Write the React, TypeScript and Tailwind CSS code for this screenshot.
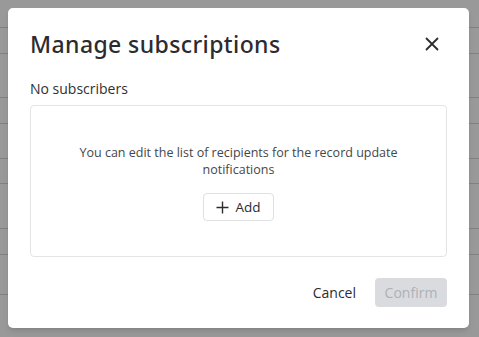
import React from 'react';

const rows = [28, 26, 44, 26, 35, 25, 45, 26, 40];

const App: React.FC = () => {
    return (
        <div className="relative w-[479px] h-[337px] overflow-hidden bg-white" style={{ fontFamily: '"Open Sans", "Noto Sans", sans-serif' }}>
            {/* underlying page */}
            <div className="flex flex-col">
                {rows.map((h, i) => (
                    <div key={i} className="border-b border-[#d8d8d8]" style={{ height: h }} />
                ))}
            </div>

            {/* overlay */}
            <div className="absolute inset-0 bg-[#000]/40 flex items-start justify-start pt-2 pl-2">
                <div className="w-[461px] h-[320px] bg-white rounded-[5px] shadow-md flex flex-col px-[22px] pt-[21px] pb-[21px]">
                    <div className="flex items-center justify-between">
                        <h2 className="text-[23px] leading-[30px] font-medium text-[#2b2c30] tracking-[0.4px]" style={{ fontFamily: '"Noto Sans", sans-serif' }}>
                            Manage subscriptions
                        </h2>
                        <button className="w-6 h-6 flex items-center justify-center mr-[3px] text-[#2b2c30]">
                            <svg width="14" height="14" viewBox="0 0 14 14" fill="none" stroke="currentColor" strokeWidth="1.8" strokeLinecap="round">
                                <path d="M1.5 1.5L12.5 12.5M12.5 1.5L1.5 12.5" />
                            </svg>
                        </button>
                    </div>

                    <div className="mt-[20px] text-[14px] leading-[20px] font-medium text-[#2f3034]">No subscribers</div>

                    <div className="mt-[6px] h-[152px] border border-[#e3e4e6] rounded-[4px] flex flex-col items-center justify-center pt-[3px]">
                        <p className="text-[12.5px] leading-[17px] text-[#45464b] text-center w-[340px]">
                            You can edit the list of recipients for the record update notifications
                        </p>
                        <button className="mt-[15px] h-[28px] px-[12px] flex items-center gap-[6px] border border-[#dfe0e2] rounded-[4px] bg-white text-[13.5px] font-medium text-[#2b2c30]">
                            <svg width="13" height="13" viewBox="0 0 13 13" fill="none" stroke="currentColor" strokeWidth="1.4">
                                <path d="M6.5 0.5V12.5M0.5 6.5H12.5" />
                            </svg>
                            Add
                        </button>
                    </div>

                    <div className="mt-auto flex items-center justify-end gap-[19px]">
                        <button className="text-[14px] font-medium text-[#2b2c30]">Cancel</button>
                        <button className="h-[29px] w-[72px] rounded-[4px] bg-[#d9dbde] text-[14px] font-medium text-[#aeb1b6]">Confirm</button>
                    </div>
                </div>
            </div>
        </div>
    );
};

export default App;
